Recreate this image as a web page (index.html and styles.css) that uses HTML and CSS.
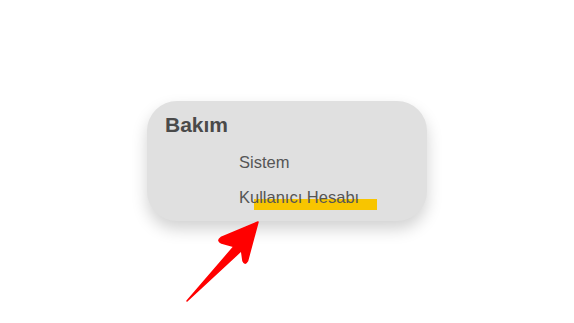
FILE: index.html
```html
<!DOCTYPE html>
<html lang="tr">
<head>
<meta charset="utf-8">
<link rel="stylesheet" href="styles.css">
</head>
<body>
<div class="stage">
  <div class="card">
    <div class="title">Bakım</div>
    <ul class="menu">
      <li class="item">Sistem</li>
      <li class="item"><span class="mark"></span><span class="label">Kullanıcı Hesabı</span></li>
    </ul>
  </div>
  <svg class="arrow" width="90" height="95" viewBox="180 215 90 95">
    <path d="M258 222 L221 237.5 Q216.5 240.5 221.5 243 L234 246.5 L187 301 L241.5 250.5 L243 261 Q245 265.5 247.5 261 Z" fill="#ff0000" stroke="#ff0000" stroke-width="1.5" stroke-linejoin="round"/>
  </svg>
</div>
</body>
</html>
```
FILE: styles.css
```css
html, body {
  margin: 0;
  padding: 0;
  background: #ffffff;
}
.stage {
  position: relative;
  width: 574px;
  height: 323px;
  padding: 101px 0 0 147px;
  box-sizing: border-box;
  font-family: "Liberation Sans", Arial, sans-serif;
}
.card {
  width: 280px;
  height: 120px;
  box-sizing: border-box;
  padding: 12px 0 0 18px;
  background: #e0e0e0;
  border-radius: 30px;
  box-shadow: 0 8px 16px rgba(0, 0, 0, 0.18);
}
.title {
  font-size: 21px;
  font-weight: bold;
  line-height: 24px;
  color: #4a4a4a;
}
.menu {
  list-style: none;
  margin: 8px 0 0 74px;
  padding: 0;
}
.item {
  position: relative;
  font-size: 16.5px;
  line-height: 35px;
  color: #555555;
}
.label {
  position: relative;
}
.mark {
  position: absolute;
  left: 15px;
  top: 19px;
  width: 123px;
  height: 11px;
  background: #f8c500;
}
.arrow {
  position: absolute;
  left: 180px;
  top: 215px;
}
```
